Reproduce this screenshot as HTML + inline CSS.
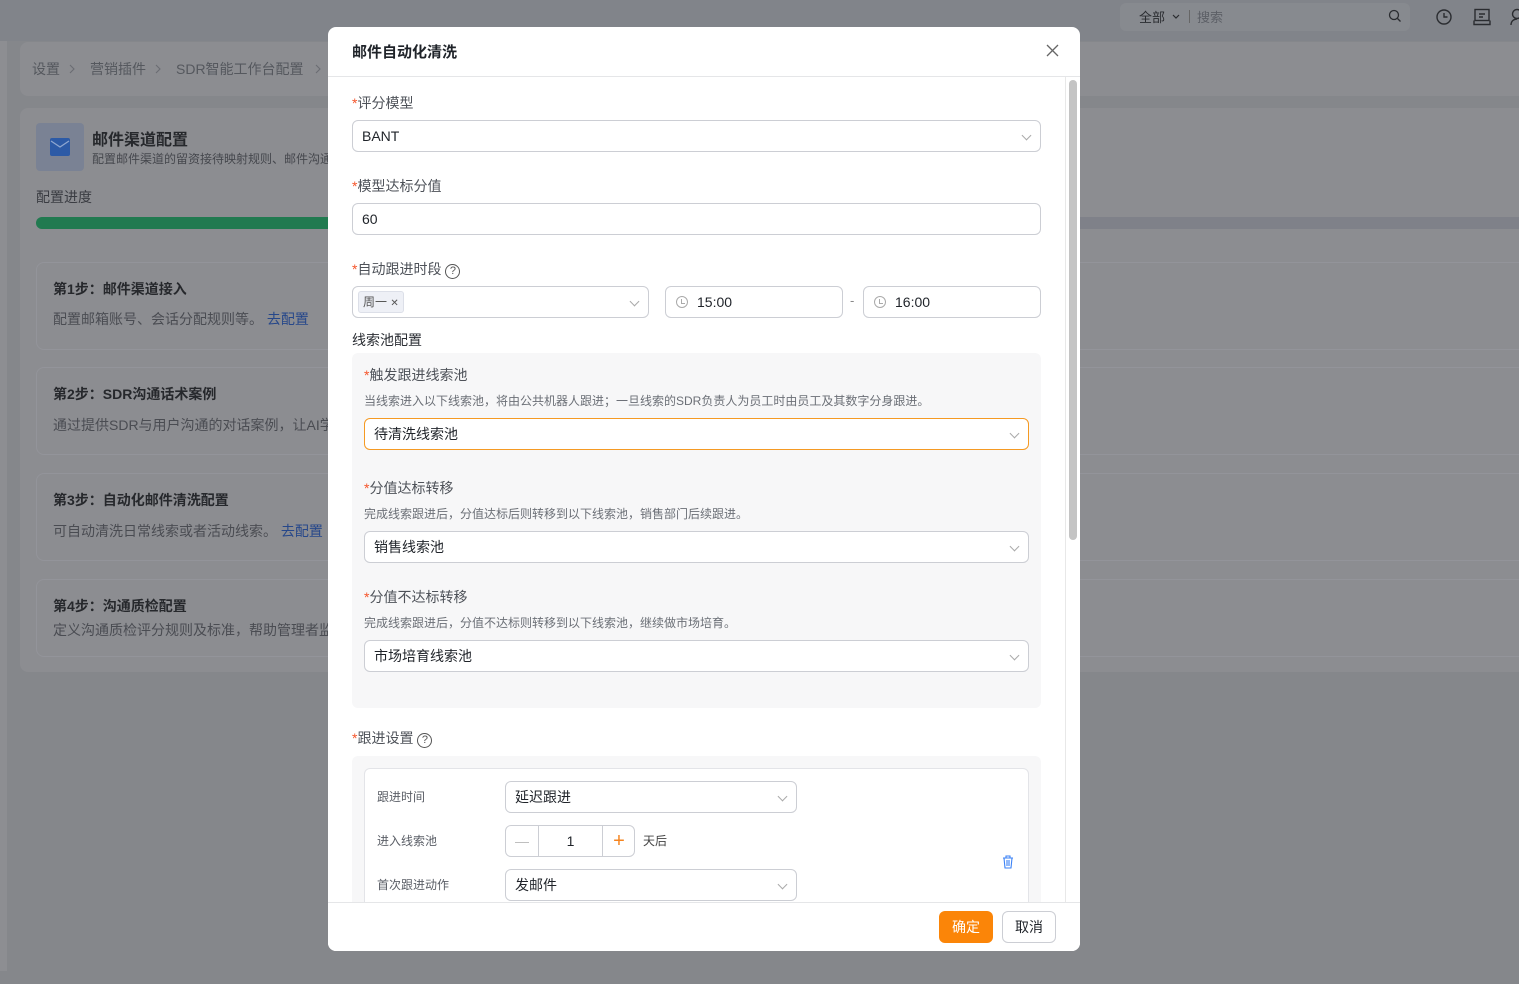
<!DOCTYPE html><html><head><meta charset="utf-8"><style>
*{box-sizing:border-box;margin:0;padding:0}
body{width:1519px;height:984px;overflow:hidden;background:#85878b;font-family:"Liberation Sans","Noto Sans CJK SC",sans-serif;position:relative;color:#1f2329}
.a{position:absolute}
.card{background:#8c8d91;border-radius:8px}
.step{position:absolute;left:36px;width:1500px;border:1px solid #93949a;border-radius:8px;background:#8c8d91}
.step b{position:absolute;left:16px;top:16px;font-size:14px;color:#26282c}
.step p{position:absolute;left:16px;font-size:14px;color:#4a4c52;white-space:nowrap}
.lnk{color:#26478a}
.modal{left:328px;top:27px;width:752px;height:924px;background:#fff;border-radius:8px;overflow:hidden}
.lbl{position:absolute;font-size:14px;color:#4e5259}
.lbl i{color:#f5552b;font-style:normal}
.inp{position:absolute;height:32px;border:1px solid #ccced4;border-radius:6px;font-size:14px;line-height:30px;padding-left:9px;color:#1f2329;background:#fff}
.chev{position:absolute;right:10px;top:11px;width:7px;height:7px;border-right:1px solid #aaa;border-bottom:1px solid #aaa;transform:rotate(45deg)}
.desc{position:absolute;font-size:12px;color:#6b6f76}
.q{display:inline-block;width:15px;height:15px;border:1.3px solid #555;border-radius:50%;font-size:11px;line-height:13px;text-align:center;vertical-align:0px;margin-left:4px;color:#555}
.clk{position:absolute;left:10px;top:9px;width:12px;height:12px;border:1px solid #aaa;border-radius:50%}
.clk:after{content:"";position:absolute;left:4px;top:2px;width:3px;height:4px;border-left:1px solid #aaa;border-bottom:1px solid #aaa}
.sl{position:absolute;font-size:12px;color:#5a5e66}
.bc{position:absolute;top:59px;font-size:14px;color:#55585e;white-space:nowrap}
</style></head><body>
<div class="a" style="left:0;top:0;width:1519px;height:41px;background:#81848a"></div>
<div class="a" style="left:1120px;top:3px;width:290px;height:28px;background:#878a8f;border-radius:6px"></div>
<div class="a" style="left:1139px;top:7px;font-size:13px;color:#2a2c30">全部</div>
<svg class="a" style="left:1172px;top:14px" width="8" height="6"><path d="M1 1l3 3 3-3" fill="none" stroke="#2a2c30" stroke-width="1.2"/></svg>
<div class="a" style="left:1189px;top:10px;width:1px;height:13px;background:#666"></div>
<div class="a" style="left:1197px;top:7px;font-size:13px;color:#5c5f66">搜索</div>
<svg class="a" style="left:1388px;top:9px" width="14" height="14"><circle cx="6" cy="6" r="4.5" fill="none" stroke="#2a2c30" stroke-width="1.3"/><path d="M9.5 9.5l3 3" stroke="#2a2c30" stroke-width="1.3"/></svg>
<svg class="a" style="left:1435px;top:8px" width="18" height="18"><circle cx="9" cy="9" r="7" fill="none" stroke="#2a2c30" stroke-width="1.4"/><path d="M9 5v4h3.5" fill="none" stroke="#2a2c30" stroke-width="1.4"/></svg>
<svg class="a" style="left:1473px;top:8px" width="18" height="18"><rect x="2" y="1.5" width="14" height="11" fill="none" stroke="#2a2c30" stroke-width="1.4"/><path d="M1 12.5v4h16v-4M6 6h6M6 9h4" fill="none" stroke="#2a2c30" stroke-width="1.4"/></svg>
<svg class="a" style="left:1510px;top:8px" width="9" height="18"><circle cx="7" cy="6" r="4.5" fill="none" stroke="#2a2c30" stroke-width="1.4"/><path d="M1 17c0-4 3-6 6-6" fill="none" stroke="#2a2c30" stroke-width="1.4"/></svg>
<div class="a" style="left:0;top:41px;width:7px;height:930px;background:#8d8e92"></div>
<div class="a card" style="left:20px;top:42px;width:1520px;height:54px"></div>
<div class="bc" style="left:32px">设置</div>
<svg class="a" style="left:69px;top:64px" width="6" height="10"><path d="M1 1l4 4-4 4" fill="none" stroke="#6a6d73" stroke-width="1.1"/></svg>
<div class="bc" style="left:90px">营销插件</div>
<svg class="a" style="left:155px;top:64px" width="6" height="10"><path d="M1 1l4 4-4 4" fill="none" stroke="#6a6d73" stroke-width="1.1"/></svg>
<div class="bc" style="left:176px">SDR智能工作台配置</div>
<svg class="a" style="left:315px;top:64px" width="6" height="10"><path d="M1 1l4 4-4 4" fill="none" stroke="#6a6d73" stroke-width="1.1"/></svg>
<div class="a card" style="left:20px;top:108px;width:1520px;height:564px"></div>
<div class="a" style="left:36px;top:123px;width:48px;height:48px;background:#7a8294;border-radius:4px"></div>
<svg class="a" style="left:50px;top:138px" width="20" height="18"><rect width="20" height="18" rx="2" fill="#2c5aa6"/><path d="M1 3l9 6 9-6" fill="none" stroke="#8ea7d0" stroke-width="1.3"/></svg>
<div class="a" style="left:92px;top:126px;font-size:16px;font-weight:bold;color:#26282c">邮件渠道配置</div>
<div class="a" style="left:92px;top:150px;font-size:12px;color:#45474d;white-space:nowrap">配置邮件渠道的留资接待映射规则、邮件沟通</div>
<div class="a" style="left:36px;top:187px;font-size:14px;color:#3a3c42">配置进度</div>
<div class="a" style="left:36px;top:217px;width:1490px;height:12px;background:#7f8189;border-radius:6px"></div>
<div class="a" style="left:36px;top:217px;width:300px;height:12px;background:#217a50;border-radius:6px 0 0 6px"></div>
<div class="step" style="top:262px;height:88px"><b>第1步：邮件渠道接入</b><p style="top:46px">配置邮箱账号、会话分配规则等。 <span class="lnk">去配置</span></p></div>
<div class="step" style="top:367px;height:88px"><b>第2步：SDR沟通话术案例</b><p style="top:47px">通过提供SDR与用户沟通的对话案例，让AI学</p></div>
<div class="step" style="top:473px;height:88px"><b>第3步：自动化邮件清洗配置</b><p style="top:47px">可自动清洗日常线索或者活动线索。 <span class="lnk">去配置</span></p></div>
<div class="step" style="top:579px;height:78px"><b>第4步：沟通质检配置</b><p style="top:40px">定义沟通质检评分规则及标准，帮助管理者监</p></div>

<div class="a modal">
<div class="a" style="left:24px;top:14px;font-size:15px;font-weight:bold">邮件自动化清洗</div>
<svg class="a" style="left:718px;top:17px" width="13" height="13"><path d="M1 1l11 11M12 1L1 12" stroke="#666" stroke-width="1.3"/></svg>
<div class="a" style="left:0;top:49px;width:752px;height:1px;background:#e5e6e8"></div>
<div class="a" style="left:737px;top:50px;width:1px;height:825px;background:#e8e8e8"></div>
<div class="a" style="left:741px;top:53px;width:8px;height:460px;background:#c4c4c4;border-radius:4px"></div>

<div class="lbl" style="left:24px;top:66px"><i>*</i>评分模型</div>
<div class="inp" style="left:24px;top:93px;width:689px">BANT<span class="chev"></span></div>
<div class="lbl" style="left:24px;top:149px"><i>*</i>模型达标分值</div>
<div class="inp" style="left:24px;top:176px;width:689px">60</div>
<div class="lbl" style="left:24px;top:232px"><i>*</i>自动跟进时段<span class="q">?</span></div>
<div class="inp" style="left:24px;top:259px;width:297px"><span style="position:absolute;left:5px;top:4px;height:22px;line-height:20px;padding:0 4px;background:#eef0f6;border:1px solid #dcdfe8;border-radius:3px;font-size:12px;color:#555">周一 <span style="font-size:10px">✕</span></span><span class="chev"></span></div>
<div class="inp" style="left:337px;top:259px;width:178px;padding-left:31px"><span class="clk"></span>15:00</div>
<div class="a" style="left:522px;top:266px;font-size:13px;color:#888">-</div>
<div class="inp" style="left:535px;top:259px;width:178px;padding-left:31px"><span class="clk"></span>16:00</div>
<div class="lbl" style="left:24px;top:303px;color:#2a2d33">线索池配置</div>
<div class="a" style="left:24px;top:326px;width:689px;height:355px;background:#f7f7f8;border-radius:6px"></div>
<div class="lbl" style="left:36px;top:338px"><i>*</i>触发跟进线索池</div>
<div class="desc" style="left:36px;top:365px">当线索进入以下线索池，将由公共机器人跟进；一旦线索的SDR负责人为员工时由员工及其数字分身跟进。</div>
<div class="inp" style="left:36px;top:391px;width:665px;border-color:#f59a23">待清洗线索池<span class="chev"></span></div>
<div class="lbl" style="left:36px;top:451px"><i>*</i>分值达标转移</div>
<div class="desc" style="left:36px;top:478px">完成线索跟进后，分值达标后则转移到以下线索池，销售部门后续跟进。</div>
<div class="inp" style="left:36px;top:504px;width:665px">销售线索池<span class="chev"></span></div>
<div class="lbl" style="left:36px;top:560px"><i>*</i>分值不达标转移</div>
<div class="desc" style="left:36px;top:587px">完成线索跟进后，分值不达标则转移到以下线索池，继续做市场培育。</div>
<div class="inp" style="left:36px;top:613px;width:665px">市场培育线索池<span class="chev"></span></div>
<div class="lbl" style="left:24px;top:701px"><i>*</i>跟进设置<span class="q">?</span></div>
<div class="a" style="left:24px;top:729px;width:689px;height:200px;background:#f7f7f8;border-radius:6px"></div>
<div class="a" style="left:36px;top:741px;width:665px;height:200px;background:#fff;border:1px solid #e3e4e8;border-radius:6px"></div>
<div class="sl" style="left:49px;top:761px">跟进时间</div>
<div class="inp" style="left:177px;top:754px;width:292px">延迟跟进<span class="chev"></span></div>
<div class="sl" style="left:49px;top:805px">进入线索池</div>
<div class="inp" style="left:177px;top:798px;width:130px;padding:0">
<span style="position:absolute;left:0;top:0;width:33px;height:30px;border-right:1px solid #ccced4;text-align:center;color:#bbb">—</span>
<span style="position:absolute;left:33px;width:63px;text-align:center">1</span>
<span style="position:absolute;left:96px;top:0;width:33px;height:30px;border-left:1px solid #ccced4;text-align:center;color:#f5841f;font-size:20px">+</span></div>
<div class="sl" style="left:315px;top:805px;color:#444">天后</div>
<svg class="a" style="left:674px;top:828px" width="12" height="14"><path d="M1 3h10M4 3V1h4v2M2 3l1 10h6l1-10M5 5v6M7 5v6" fill="none" stroke="#3b82f6" stroke-width="1.1"/></svg>
<div class="sl" style="left:49px;top:849px">首次跟进动作</div>
<div class="inp" style="left:177px;top:842px;width:292px">发邮件<span class="chev"></span></div>

<div class="a" style="left:0;top:875px;width:752px;height:49px;background:#fff;border-top:1px solid #e5e6e8"></div>
<div class="a" style="left:611px;top:884px;width:54px;height:32px;background:#fb8508;border-radius:6px;color:#fff;font-size:14px;line-height:32px;text-align:center">确定</div>
<div class="a" style="left:674px;top:884px;width:54px;height:32px;border:1px solid #ccced4;border-radius:6px;font-size:14px;line-height:30px;text-align:center">取消</div>
</div>
</body></html>
